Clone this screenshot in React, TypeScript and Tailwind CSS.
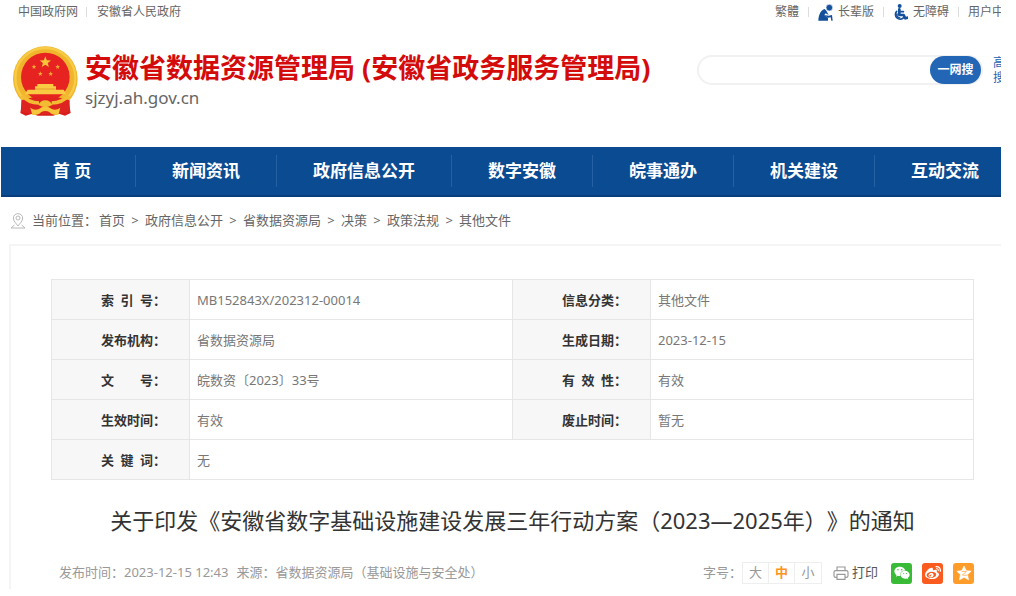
import React, { useState } from 'react';
import { FaWeibo, FaWeixin } from 'react-icons/fa';

const navLinks = ['新闻资讯', '政府信息公开', '数字安徽', '皖事通办', '机关建设', '互动交流'];

const crumbs = ['首页', '政府信息公开', '省数据资源局', '决策', '政策法规', '其他文件'];

// en and em spaces keep the short labels as wide as four characters
const infoRows = [
    ['索\u2002引\u2002号：', 'MB152843X/202312-00014', '信息分类：', '其他文件'],
    ['发布机构：', '省数据资源局', '生成日期：', '2023-12-15'],
    ['文\u2003\u2003号：', '皖数资〔2023〕33号', '有\u2002效\u2002性：', '有效'],
    ['生效时间：', '有效', '废止时间：', '暂无'],
];

const Emblem: React.FC = () => (
    <svg className="w-[65px] h-[70px] shrink-0" viewBox="38 29 195 210" aria-hidden="true">
        <path d="M66 190L60 230L76 238L96 232L112 238H158L176 232L194 238L211 230L204 190Z" fill="#d81e1c" />
        <circle cx="135" cy="127" r="97" fill="#f0b52c" />
        <circle cx="135" cy="125" r="90" fill="none" stroke="#f7cb45" strokeWidth="7" />
        <circle cx="135" cy="122" r="73" fill="#e62320" />
        <path d="M135 60l4.400 11.500 12.600.7-9.800 7.800 3.300 12-10.500-6.800-10.500 6.800 3.300-12-9.800-7.800 12.600-.7z" fill="#f8c53a" />
        <g fill="#f2a634">
            <path d="M101 84l2 5 5 .3-4 3.400 1.400 5.300-4.400-3-4.400 3 1.400-5.300-4-3.400 5-.3z" />
            <path d="M172 84l2 5 5 .3-4 3.400 1.400 5.300-4.400-3-4.400 3 1.400-5.300-4-3.400 5-.3z" />
            <path d="M120 105l2 5 5 .3-4 3.400 1.400 5.300-4.400-3-4.400 3 1.400-5.300-4-3.400 5-.3z" />
            <path d="M151 105l2 5 5 .3-4 3.400 1.400 5.300-4.400-3-4.400 3 1.400-5.300-4-3.400 5-.3z" />
        </g>
        <path d="M111 143H159V150H167V160H190L198 174H73L82 160H104V150H111Z" fill="#f9cb43" />
        <path d="M104 158H166" stroke="#dd8a23" strokeWidth="2" />
        <path d="M63 192L98 183Q135 194 172 183L208 192L208 226Q170 234 135 234Q96 234 62 226Z" fill="#de2421" />
        <path d="M66 177Q84 200 116 200M204 177Q186 200 154 200" fill="none" stroke="#f2bb32" strokeWidth="11" />
        <path d="M114 206Q120 192 135 192Q150 192 156 206Q146 212 135 212Q124 212 114 206Z" fill="#f2bb32" />
        <path d="M90 214Q106 226 122 214Q135 206 148 214Q164 226 180 214L174 236Q156 238 148 228Q135 220 122 228Q114 238 96 236Z" fill="#f6c53c" />
    </svg>
);

const ElderIcon: React.FC = () => (
    <svg className="w-[15px] h-[17px]" viewBox="0 0 45 51" fill="#14509b" aria-hidden="true">
        <path d="M20 15C10 17 2 30 1 50H30V41L19 33L23 28L32 33L25 20Z" />
        <path d="M19 33L32 35L42 33L44 50H40L38 40L30 41Z" />
        <circle cx="34" cy="11" r="10" stroke="#ffffff" strokeWidth="2" />
    </svg>
);

const WheelchairIcon: React.FC = () => (
    <svg className="w-[15px] h-[17px]" viewBox="0 0 45 51" fill="none" stroke="#14509b" strokeLinecap="round" strokeLinejoin="round" aria-hidden="true">
        <circle cx="20" cy="6" r="6" fill="#14509b" stroke="none" />
        <path d="M19 16V33H32L37 43L43 41" strokeWidth="8" />
        <path d="M20 23H31" strokeWidth="5" />
        <path d="M11 22A14 14 0 1 0 32 41" strokeWidth="5" />
        <path d="M12 30Q10 40 20 42" strokeWidth="5" />
    </svg>
);

const PinIcon: React.FC = () => (
    <svg className="w-4 h-4" viewBox="0 0 48 48" fill="none" stroke="#b9b9b9" strokeWidth="3" aria-hidden="true">
        <path d="M24 39C18 31 10 24 10 15a14 13 0 0 1 28 0c0 9-8 16-14 24z" />
        <circle cx="24" cy="15" r="6" />
        <path d="M13 36L3 45H45L35 36" />
    </svg>
);

const PrinterIcon: React.FC = () => (
    <svg className="w-4 h-4" viewBox="0 0 48 48" fill="none" stroke="#999999" strokeWidth="3.500" aria-hidden="true">
        <path d="M12 17V6H36V17M12 37H8Q3 37 3 32V22Q3 17 8 17H40Q45 17 45 22V32Q45 37 40 37H36" />
        <path d="M12 28H36V43H12Z" />
    </svg>
);

const QzoneIcon: React.FC = () => (
    <svg className="w-4 h-4" viewBox="0 0 48 48" aria-hidden="true">
        <path d="M24 3l6.500 14 15 1.500-11 10.500 3 15.500-13.500-7.500-13.500 7.500 3-15.500-11-10.500 15-1.500z" fill="#ffffff" stroke="#ffffff" strokeWidth="2" strokeLinejoin="round" />
        <path d="M17 20Q24 18 31 20L19 30Q26 32 35 30" fill="none" stroke="#ff9c2a" strokeWidth="2" />
    </svg>
);

const Divider: React.FC = () => <span className="w-px h-2.5 shrink-0 bg-[#dddddd]" />;

const TopBar: React.FC = () => (
    <div className="h-6 flex items-center justify-between text-xs text-[#666666]">
        <div className="flex items-center gap-2 pl-[17px]">
            <a href="#gov">中国政府网</a>
            <Divider />
            <a href="#province" className="pl-0.5">安徽省人民政府</a>
        </div>
        <div className="w-[226px] shrink-0 flex items-center gap-[9px] overflow-hidden whitespace-nowrap">
            <a href="#traditional" className="shrink-0">繁體</a>
            <Divider />
            <a href="#elder" className="shrink-0 flex items-center gap-[5px]"><ElderIcon />长辈版</a>
            <Divider />
            <a href="#accessible" className="shrink-0 flex items-center gap-[5px]"><WheelchairIcon />无障碍</a>
            <Divider />
            <a href="#user" className="shrink-0">用户中</a>
        </div>
    </div>
);

const Header: React.FC = () => {
    const [keyword, setKeyword] = useState('');

    return (
        <header className="flex items-start pl-3 pt-[22px] pb-[31px]">
            <Emblem />
            <div className="pl-[7px] pt-1 whitespace-nowrap">
                <h1 className="text-[27px] leading-9 font-bold text-[#d40b0b]">安徽省数据资源管理局 (安徽省政务服务管理局)</h1>
                <p className="text-[17px] leading-6 text-[#666666]">sjzyj.ah.gov.cn</p>
            </div>
            <form
                className="ml-auto mt-[9px] w-[286px] h-[30px] shrink-0 flex items-center rounded-full border-2 border-[#f1f1f1]"
                onSubmit={(e) => e.preventDefault()}
            >
                <input
                    type="text"
                    aria-label="搜索"
                    value={keyword}
                    onChange={(e) => setKeyword(e.target.value)}
                    className="min-w-0 flex-1 px-4 text-sm outline-none bg-transparent"
                />
                <button type="submit" className="w-[51px] h-7 rounded-full bg-[#2266b5] text-xs font-bold text-white">
                    一网搜
                </button>
            </form>
            <a href="#advanced" className="ml-2.5 mt-[9px] w-2 shrink-0 overflow-hidden text-xs leading-[15px] text-[#2266b5]">
                <span className="block w-3">高搜</span>
            </a>
        </header>
    );
};

const NavBar: React.FC = () => (
    <nav className="h-[50px] flex items-center overflow-hidden pl-2 bg-[#0b4b92] border-b-2 border-[#083e7c] text-[17px] font-bold text-white whitespace-nowrap">
        <a href="#home" className="w-[126px] shrink-0 text-center">首 页</a>
        {navLinks.map((text) => (
            <a key={text} href={`#${text}`} className="h-8 px-9 shrink-0 flex items-center border-l border-[#2560a2]">
                {text}
            </a>
        ))}
    </nav>
);

const Breadcrumb: React.FC = () => (
    <div className="h-[47px] flex items-center pl-[9px] text-[13px] text-[#666666] whitespace-nowrap">
        <PinIcon />
        <span className="pl-1.5 pr-0.5">当前位置：</span>
        {crumbs.map((text, i) => (
            <React.Fragment key={text}>
                {i > 0 && <span className="w-5 text-center">&gt;</span>}
                <a href={`#${text}`}>{text}</a>
            </React.Fragment>
        ))}
    </div>
);

const InfoTable: React.FC = () => {
    const labelClass = 'h-10 border border-[#e6e6e6] bg-[#f7f7f7] pr-[23px] text-right font-bold text-[#333333]';
    const valueClass = 'h-10 border border-[#e6e6e6] pl-[7px]';

    return (
        <table className="w-full table-fixed border-collapse text-[13px] leading-5 text-[#777777]">
            <colgroup>
                <col className="w-[138px]" />
                <col />
                <col className="w-[138px]" />
                <col />
            </colgroup>
            <tbody>
                {infoRows.map(([labelA, valueA, labelB, valueB]) => (
                    <tr key={labelA}>
                        <th scope="row" className={labelClass}>{labelA}</th>
                        <td className={valueClass}>{valueA}</td>
                        <th scope="row" className={labelClass}>{labelB}</th>
                        <td className={valueClass}>{valueB}</td>
                    </tr>
                ))}
                <tr>
                    <th scope="row" className={labelClass}>{'关\u2002键\u2002词：'}</th>
                    <td colSpan={3} className={valueClass}>无</td>
                </tr>
            </tbody>
        </table>
    );
};

const ArticleMeta: React.FC = () => {
    const [size, setSize] = useState('中');

    return (
        <div className="mt-[22px] h-[22px] flex items-center justify-between pl-2 text-[13px] text-[#999999] whitespace-nowrap">
            <div className="flex gap-2">
                <span>发布时间：2023-12-15 12:43</span>
                <span>来源：省数据资源局（基础设施与安全处）</span>
            </div>
            <div className="flex items-center">
                <span>字号：</span>
                <div className="flex h-[22px] border border-[#eeeeee] divide-x divide-[#eeeeee]">
                    {['大', '中', '小'].map((s) => (
                        <button
                            key={s}
                            type="button"
                            onClick={() => setSize(s)}
                            className={`w-[26px] ${size === s ? 'font-bold text-[#ff9420]' : ''}`}
                        >
                            {s}
                        </button>
                    ))}
                </div>
                <button type="button" className="ml-[11px] flex items-center gap-[3px] text-[#555555]">
                    <PrinterIcon />打印
                </button>
                <div className="ml-[13px] flex gap-2.5">
                    <a href="#wechat" aria-label="微信" className="w-[21px] h-[21px] flex items-center justify-center rounded-[3px] bg-[#3abb38] text-white">
                        <FaWeixin className="w-4 h-4" />
                    </a>
                    <a href="#weibo" aria-label="微博" className="w-[21px] h-[21px] flex items-center justify-center rounded-[3px] bg-[#fb5b1f] text-white">
                        <FaWeibo className="w-4 h-4" />
                    </a>
                    <a href="#qzone" aria-label="QQ空间" className="w-[21px] h-[21px] flex items-center justify-center rounded-[3px] bg-[#ff9c2a]">
                        <QzoneIcon />
                    </a>
                </div>
            </div>
        </div>
    );
};

const App: React.FC = () => (
    <div className="pl-px pr-[15px] bg-white overflow-hidden font-['Noto_Sans','Noto_Sans_CJK_SC',sans-serif]">
        <TopBar />
        <Header />
        <NavBar />
        <Breadcrumb />
        <main className="ml-2 border-l-2 border-t-2 border-[#f5f5f5] pl-10 pr-[27px] pt-[33px] pb-[5px]">
            <InfoTable />
            <h2 className="mt-5 text-[22px] leading-10 text-center text-[#333333] whitespace-nowrap [text-spacing-trim:space-all]">
                关于印发《安徽省数字基础设施建设发展三年行动方案（2023—2025年）》的通知
            </h2>
            <ArticleMeta />
        </main>
    </div>
);

export default App;
